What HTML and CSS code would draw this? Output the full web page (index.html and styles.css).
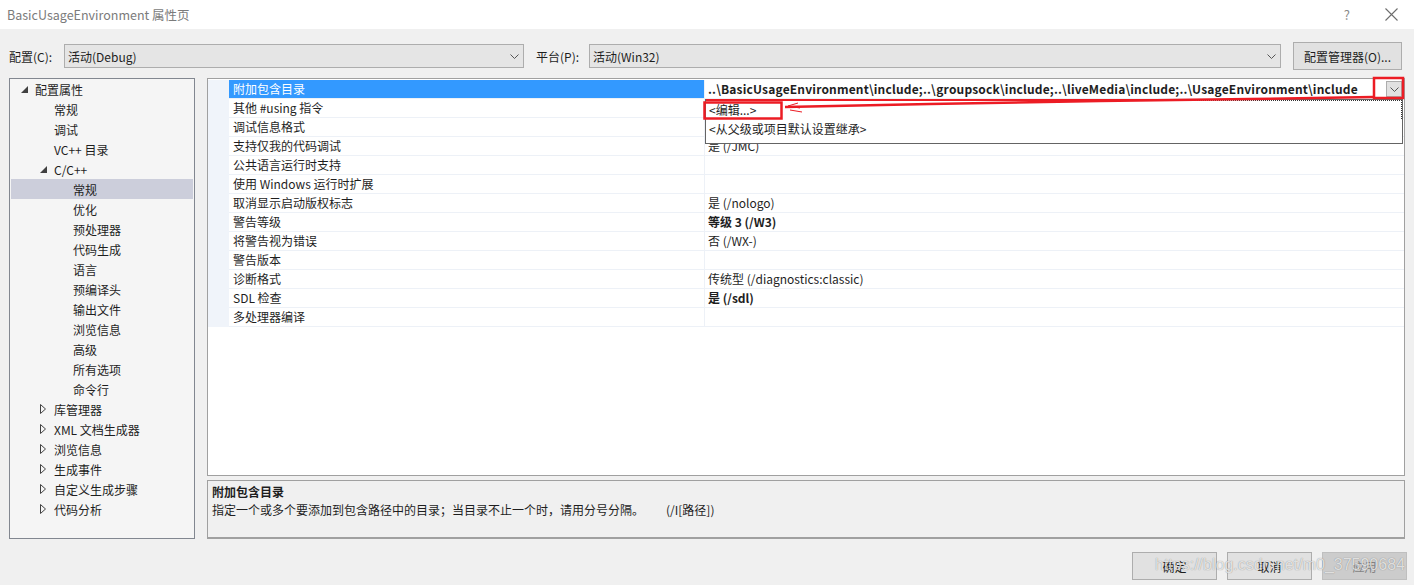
FILE: index.html
```html
<!DOCTYPE html>
<html lang="zh-CN">
<head>
    <meta charset="UTF-8">
    <title>BasicUsageEnvironment 属性页</title>
    <link rel="stylesheet" href="styles.css">
</head>
<body>
    <!-- window title bar -->
    <div class="titlebar">
        <span class="title">BasicUsageEnvironment 属性页</span>
        <span class="help">?</span>
        <svg class="close" width="13" height="13" viewBox="0 0 13 13">
            <path d="M0.5 0.5 L12.5 12.5 M12.5 0.5 L0.5 12.5" stroke="#6d6d6d" stroke-width="1.1" fill="none"/>
        </svg>
    </div>

    <!-- configuration / platform selectors -->
    <div class="config-row">
        <span class="cfg-label">配置(C):</span>
        <div class="combo combo-config">
            <span>活动(Debug)</span>
            <svg class="chev" width="9" height="5" viewBox="0 0 9 5"><path d="M0.5 0.5 L4.5 4.5 L8.5 0.5" stroke="#555" fill="none"/></svg>
        </div>
        <span class="cfg-label platform-label">平台(P):</span>
        <div class="combo combo-platform">
            <span>活动(Win32)</span>
            <svg class="chev" width="9" height="5" viewBox="0 0 9 5"><path d="M0.5 0.5 L4.5 4.5 L8.5 0.5" stroke="#555" fill="none"/></svg>
        </div>
        <button class="btn btn-manager">配置管理器(O)...</button>
    </div>

    <div class="main">
        <!-- left navigation tree -->
        <div class="tree">
            <div class="tree-row lvl0"><span class="arrow"><svg width="7" height="7" viewBox="0 0 7 7"><path d="M7 0 L7 7 L0 7 Z" fill="#404040"/></svg></span><span>配置属性</span></div>
            <div class="tree-row lvl1"><span class="arrow"></span><span>常规</span></div>
            <div class="tree-row lvl1"><span class="arrow"></span><span>调试</span></div>
            <div class="tree-row lvl1"><span class="arrow"></span><span>VC++ 目录</span></div>
            <div class="tree-row lvl1"><span class="arrow"><svg width="7" height="7" viewBox="0 0 7 7"><path d="M7 0 L7 7 L0 7 Z" fill="#404040"/></svg></span><span>C/C++</span></div>
            <div class="tree-row lvl2 selected"><span class="arrow"></span><span>常规</span></div>
            <div class="tree-row lvl2"><span class="arrow"></span><span>优化</span></div>
            <div class="tree-row lvl2"><span class="arrow"></span><span>预处理器</span></div>
            <div class="tree-row lvl2"><span class="arrow"></span><span>代码生成</span></div>
            <div class="tree-row lvl2"><span class="arrow"></span><span>语言</span></div>
            <div class="tree-row lvl2"><span class="arrow"></span><span>预编译头</span></div>
            <div class="tree-row lvl2"><span class="arrow"></span><span>输出文件</span></div>
            <div class="tree-row lvl2"><span class="arrow"></span><span>浏览信息</span></div>
            <div class="tree-row lvl2"><span class="arrow"></span><span>高级</span></div>
            <div class="tree-row lvl2"><span class="arrow"></span><span>所有选项</span></div>
            <div class="tree-row lvl2"><span class="arrow"></span><span>命令行</span></div>
            <div class="tree-row lvl1"><span class="arrow"><svg width="6" height="10" viewBox="0 0 6 10"><path d="M0.5 0.5 L5.5 5 L0.5 9.5 Z" fill="none" stroke="#404040"/></svg></span><span>库管理器</span></div>
            <div class="tree-row lvl1"><span class="arrow"><svg width="6" height="10" viewBox="0 0 6 10"><path d="M0.5 0.5 L5.5 5 L0.5 9.5 Z" fill="none" stroke="#404040"/></svg></span><span>XML 文档生成器</span></div>
            <div class="tree-row lvl1"><span class="arrow"><svg width="6" height="10" viewBox="0 0 6 10"><path d="M0.5 0.5 L5.5 5 L0.5 9.5 Z" fill="none" stroke="#404040"/></svg></span><span>浏览信息</span></div>
            <div class="tree-row lvl1"><span class="arrow"><svg width="6" height="10" viewBox="0 0 6 10"><path d="M0.5 0.5 L5.5 5 L0.5 9.5 Z" fill="none" stroke="#404040"/></svg></span><span>生成事件</span></div>
            <div class="tree-row lvl1"><span class="arrow"><svg width="6" height="10" viewBox="0 0 6 10"><path d="M0.5 0.5 L5.5 5 L0.5 9.5 Z" fill="none" stroke="#404040"/></svg></span><span>自定义生成步骤</span></div>
            <div class="tree-row lvl1"><span class="arrow"><svg width="6" height="10" viewBox="0 0 6 10"><path d="M0.5 0.5 L5.5 5 L0.5 9.5 Z" fill="none" stroke="#404040"/></svg></span><span>代码分析</span></div>
        </div>

        <div class="right-col">
            <!-- property grid -->
            <div class="grid">
                <div class="grid-row selected">
                    <div class="gutter"></div>
                    <div class="name">附加包含目录</div>
                    <div class="value edit">
                        <span class="bold path">..\BasicUsageEnvironment\include;..\groupsock\include;..\liveMedia\include;..\UsageEnvironment\include</span>
                        <span class="drop-btn"><svg width="9" height="5" viewBox="0 0 9 5"><path d="M0.5 0.5 L4.5 4.5 L8.5 0.5" stroke="#555" fill="none"/></svg></span>
                    </div>
                </div>
                <div class="grid-row"><div class="gutter"></div><div class="name">其他 #using 指令</div><div class="value"></div></div>
                <div class="grid-row"><div class="gutter"></div><div class="name">调试信息格式</div><div class="value"></div></div>
                <div class="grid-row"><div class="gutter"></div><div class="name">支持仅我的代码调试</div><div class="value">是 (/JMC)</div></div>
                <div class="grid-row"><div class="gutter"></div><div class="name">公共语言运行时支持</div><div class="value"></div></div>
                <div class="grid-row"><div class="gutter"></div><div class="name">使用 Windows 运行时扩展</div><div class="value"></div></div>
                <div class="grid-row"><div class="gutter"></div><div class="name">取消显示启动版权标志</div><div class="value">是 (/nologo)</div></div>
                <div class="grid-row"><div class="gutter"></div><div class="name">警告等级</div><div class="value bold">等级 3 (/W3)</div></div>
                <div class="grid-row"><div class="gutter"></div><div class="name">将警告视为错误</div><div class="value">否 (/WX-)</div></div>
                <div class="grid-row"><div class="gutter"></div><div class="name">警告版本</div><div class="value"></div></div>
                <div class="grid-row"><div class="gutter"></div><div class="name">诊断格式</div><div class="value">传统型 (/diagnostics:classic)</div></div>
                <div class="grid-row"><div class="gutter"></div><div class="name">SDL 检查</div><div class="value bold">是 (/sdl)</div></div>
                <div class="grid-row"><div class="gutter"></div><div class="name">多处理器编译</div><div class="value"></div></div>

                <!-- open dropdown of the edited value -->
                <div class="drop-list">
                    <div class="drop-item focused">&lt;编辑...&gt;</div>
                    <div class="drop-item">&lt;从父级或项目默认设置继承&gt;</div>
                </div>
            </div>

            <!-- description of selected property -->
            <div class="desc">
                <div class="desc-title">附加包含目录</div>
                <div class="desc-text">指定一个或多个要添加到包含路径中的目录；当目录不止一个时，请用分号分隔。<span class="switch">(/I[路径])</span></div>
            </div>
        </div>
    </div>

    <div class="buttons">
        <button class="btn">确定</button>
        <button class="btn">取消</button>
        <button class="btn disabled">应用</button>
    </div>

    <!-- red markup drawn over the screenshot -->
    <svg class="markup" width="1414" height="585" viewBox="0 0 1414 585">
        <rect x="1374" y="78" width="29" height="20" fill="none" stroke="#ec1c24" stroke-width="2.5"/>
        <rect x="704.5" y="102.5" width="77" height="16" fill="none" stroke="#ec1c24" stroke-width="2.5"/>
        <path d="M706 100 L1195 100" stroke="#ec1c24" stroke-width="2"/>
        <path d="M785 107 L930 104 L1100 101 L1250 99 L1373 97" stroke="#ec1c24" stroke-width="2.5" fill="none"/>
        <path d="M798 103 L788 106 L800 108 M790 110 L802 112" stroke="#ec1c24" stroke-width="1" fill="none"/>
    </svg>

    <div class="watermark">https://blog.csdn.net/m0_37590684</div>
</body>
</html>
```

FILE: styles.css
```css
/* base window */
html, body {
    margin: 0;
    padding: 0;
}

body {
    width: 1414px;
    height: 585px;
    background: #f0f0f0;
    color: #1e1e1e;
    font-family: "Noto Sans CJK SC", "Noto Sans", sans-serif;
    font-size: 12px;
    position: relative;
    overflow: hidden;
}

/* title bar */
.titlebar {
    height: 29px;
    background: #ffffff;
    display: flex;
    align-items: center;
    padding: 0 16px 0 7px;
}

.title {
    flex: 1;
    color: #7b7b7b;
    font-size: 12.5px;
}

.help {
    color: #8a8a8a;
    font-size: 13px;
    margin-right: 35px;
}

.close {
    display: block;
}

/* config selectors */
.config-row {
    display: flex;
    align-items: center;
    height: 28px;
    padding: 13px 12px 0 9px;
}

.cfg-label {
    width: 55px;
    flex: none;
}

.platform-label {
    margin-left: 12px;
    width: 53px;
}

.combo {
    height: 24px;
    box-sizing: border-box;
    border: 1px solid #adadad;
    background: #e5e5e5;
    display: flex;
    align-items: center;
    justify-content: space-between;
    padding: 0 4px 0 3px;
}

.combo-config {
    width: 460px;
}

.combo-platform {
    width: 692px;
}

.chev {
    display: block;
}

.btn {
    font-family: inherit;
    font-size: 12px;
    color: #1e1e1e;
    background: #e1e1e1;
    border: 1px solid #adadad;
    width: 85px;
    height: 28px;
    padding: 0;
}

.btn-manager {
    width: 109px;
    margin-left: 12px;
}

.btn.disabled {
    background: #cccccc;
    border-color: #bfbfbf;
    color: #838383;
}

/* main area */
.main {
    display: flex;
    gap: 12px;
    height: 461px;
    margin-top: 8px;
    padding: 0 9px;
}

.tree {
    width: 186px;
    flex: none;
    box-sizing: border-box;
    border: 1px solid #828790;
    background: #f5f5f5;
}

.tree-row {
    height: 20px;
    display: flex;
    align-items: center;
    margin: 0 1px;
}

.tree-row .arrow {
    width: 16px;
    height: 20px;
    margin-right: 3px;
    display: flex;
    align-items: center;
    justify-content: center;
}

.tree-row.lvl0 { padding-left: 5px; }
.tree-row.lvl1 { padding-left: 24px; }
.tree-row.lvl2 { padding-left: 43px; }

.tree-row.selected {
    background: #cccedb;
}

.right-col {
    flex: 1;
    display: flex;
    flex-direction: column;
    gap: 4px;
}

/* property grid */
.grid {
    height: 398px;
    box-sizing: border-box;
    border: 1px solid #a0a0a0;
    background: #ffffff;
    padding-top: 1px;
    position: relative;
}

.grid-row {
    display: grid;
    grid-template-columns: 21px 476px 1fr;
    height: 19px;
}

.gutter {
    background: #f0f4fa;
}

.grid-row .name,
.grid-row .value {
    box-sizing: border-box;
    border-bottom: 1px solid #edf1f7;
    line-height: 18px;
    white-space: nowrap;
    overflow: hidden;
}

.grid-row .name {
    padding-left: 4px;
    border-right: 1px solid #edf1f7;
}

.grid-row .value {
    padding-left: 3px;
}

.grid-row.selected .name {
    background: #3399ff;
    color: #ffffff;
}

.value.edit {
    display: flex;
    justify-content: space-between;
    align-items: center;
    padding-right: 2px;
}

.bold {
    font-weight: bold;
}

.path {
    letter-spacing: 0.18px;
}

.drop-btn {
    width: 16px;
    height: 16px;
    box-sizing: border-box;
    border: 1px solid #adadad;
    background: #e1e1e1;
    display: flex;
    align-items: center;
    justify-content: center;
}

.drop-list {
    position: absolute;
    left: 497px;
    top: 20px;
    width: 698px;
    height: 45px;
    box-sizing: border-box;
    background: #ffffff;
    border: 1px solid #646464;
}

.drop-item {
    height: 19px;
    line-height: 19px;
    padding-left: 3px;
    box-sizing: border-box;
}

.drop-item.focused {
    border-top: 1px dotted #333;
    border-right: 1px dotted #333;
    line-height: 17px;
}

/* description pane */
.desc {
    height: 59px;
    box-sizing: border-box;
    border: 1px solid #a0a0a0;
    border-bottom-width: 2px;
    padding: 2px 4px;
    line-height: 18px;
}

.desc-title {
    font-weight: bold;
}

.switch {
    margin-left: 22px;
}

/* dialog buttons */
.buttons {
    display: flex;
    justify-content: flex-end;
    gap: 10px;
    margin-top: 13px;
    padding-right: 7px;
}

/* annotations */
.markup {
    position: absolute;
    left: 0;
    top: 0;
    pointer-events: none;
}

.watermark {
    position: absolute;
    left: 1155px;
    top: 556px;
    font-family: "Liberation Sans", sans-serif;
    font-size: 16px;
    color: rgba(255, 255, 255, 0.75);
    text-shadow: 0 0 1px rgba(0, 0, 0, 0.45);
    pointer-events: none;
}
```
